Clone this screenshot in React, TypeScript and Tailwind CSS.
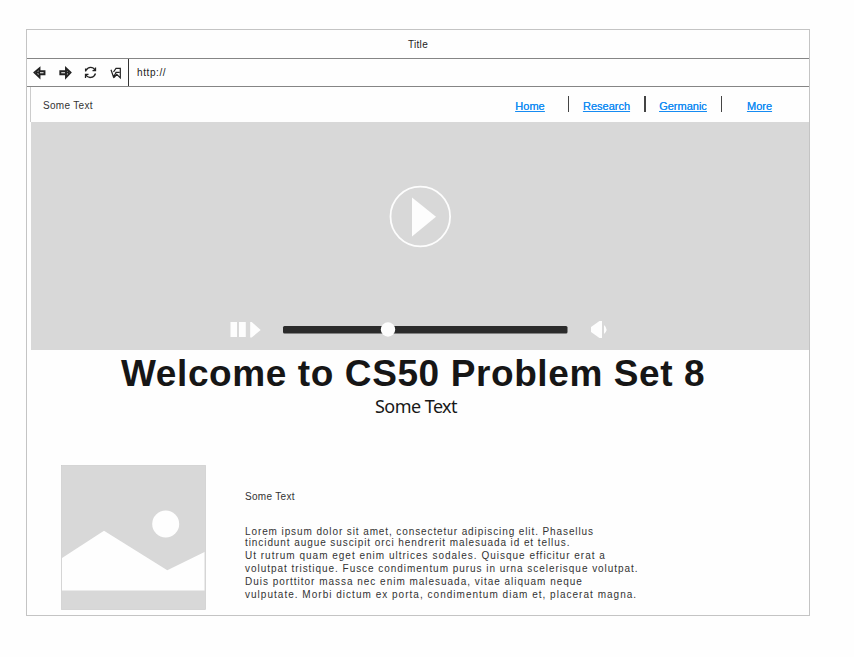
import type { ReactNode } from "react";

const body = "whitespace-nowrap text-[10px] leading-[13px]";

function Toolbar() {
  return (
    <div className="flex h-[28px] border-b border-[#858585]">
      <div className="flex w-[102px] shrink-0 items-center border-r-[1.5px] border-[#333]">
        <svg width="101" height="27" viewBox="27 59 101 27" fill="none" stroke="#222" strokeWidth="1.9">
          <path d="M34.5 72.5 L39.5 68.2 V71.2 H44.5 V74.2 H39.5 V77.3 Z M36 72.5 h4" />
          <path d="M70.5 72.5 L66 68.2 V71.2 H60.3 V74.2 H66 V77.3 Z M65 72.5 h4" />
          <path d="M85.6 71.5 V68.5 M86 70.5 C88 66.5 93 66.5 95 70.2 M95.5 67.5 V70.7 H92.5 M95.5 73.5 C94 78.2 88 78.8 86 75 M85.5 78 V74.4 H88.5" strokeWidth="1.3" />
          <path d="M111 69.8 L113.5 77 L116 72.5 M113.5 72 L116 68.3 H120.3 V77.8 L116.8 74.3 L114 77.7 M115.5 72.3 H119.5" strokeWidth="1.2" />
        </svg>
      </div>
      <div className="pt-[6px] pl-[8px] text-[10px] leading-[15px] tracking-[0.6px] text-[#222]">http://</div>
    </div>
  );
}

function NavLink({ children, className }: { children: ReactNode; className: string }) {
  return (
    <a className={`${className} shrink-0 text-center text-[11px] leading-[14px] text-[#168bf2] underline [text-shadow:0_0_0.5px_#168bf2]`}>
      {children}
    </a>
  );
}

function Divider() {
  return <span className="mb-[3px] h-[16px] w-[1.5px] shrink-0 bg-[#444]" />;
}

function Nav() {
  return (
    <nav className="ml-[3px] flex h-[35px] items-center border-l border-[#ccc] pl-[12px]">
      <span className="w-[449.5px] pt-px text-[10px] tracking-[0.3px] text-[#333]">Some Text</span>
      <div className="flex items-center pt-[2px]">
        <NavLink className="w-[75px]">Home</NavLink>
        <Divider />
        <NavLink className="w-[75px]">Research</NavLink>
        <Divider />
        <NavLink className="w-[75px]">Germanic</NavLink>
        <Divider />
        <NavLink className="w-[75px]">More</NavLink>
      </div>
    </nav>
  );
}

function Video() {
  return (
    <div className="ml-[4px] h-[228px] bg-[#d8d8d8]">
      <svg width="778" height="228" viewBox="31 122 778 228">
        <circle cx="420.3" cy="216.5" r="29.8" fill="none" stroke="#fdfdfd" strokeWidth="1.8" />
        <path d="M412 197.5 L436 216.8 L412 236.5 Z" fill="#fdfdfd" />
        <path d="M230.5 322 h6.5 v15 h-6.5 Z M239 322 h6.8 v15 H239 Z M250.2 322 h1.5 L260.7 330 L251.7 337.5 h-1.5 Z" fill="#fdfdfd" />
        <rect x="283" y="326" width="284.5" height="7.5" rx="1.5" fill="#2b2b2b" />
        <circle cx="388" cy="329.5" r="7.2" fill="#fdfdfd" />
        <path d="M591 327 L599.5 321 H602 V338 H599.5 L591 332 Z" fill="#fdfdfd" />
        <path d="M604 325 Q609 329.5 604 334 Z" fill="#fdfdfd" />
      </svg>
    </div>
  );
}

function Article() {
  return (
    <section className="flex pt-[49px] pl-[34px]">
      <svg width="145" height="145" viewBox="61 464.5 145 145" className="shrink-0">
        <rect x="61.5" y="465" width="144" height="144" fill="#d8d8d8" stroke="#ccc" strokeWidth="0.7" />
        <path d="M62 557.5 L104 530.3 L167.3 569.8 L204.5 551.5 V590 H62 Z" fill="#fefefe" />
        <circle cx="165.7" cy="523.5" r="13.5" fill="#fefefe" />
      </svg>
      <div className="pl-[39px] pt-[25px] text-[#333]">
        <div className={`${body} tracking-[0.3px]`}>Some Text</div>
        <div className="pt-[22px]">
          <div className={`${body} tracking-[0.9px]`}>Lorem ipsum dolor sit amet, consectetur adipiscing elit. Phasellus</div>
          <div className={`${body} -mt-[2px] tracking-[0.92px]`}>tincidunt augue suscipit orci hendrerit malesuada id et tellus.</div>
          <div className={`${body} tracking-[1px]`}>Ut rutrum quam eget enim ultrices sodales. Quisque efficitur erat a</div>
          <div className={`${body} tracking-[0.96px]`}>volutpat tristique. Fusce condimentum purus in urna scelerisque volutpat.</div>
          <div className={`${body} tracking-[0.98px]`}>Duis porttitor massa nec enim malesuada, vitae aliquam neque</div>
          <div className={`${body} tracking-[1.02px]`}>vulputate. Morbi dictum ex porta, condimentum diam et, placerat magna.</div>
        </div>
      </div>
    </section>
  );
}

export default function App() {
  return (
    <div className="h-[657px] w-[854px] overflow-hidden bg-[#fefefe] pt-[29px] pl-[26px] font-['Liberation_Sans',sans-serif]">
      <main className="h-[587px] w-[784px] border border-[#c4c4c4]">
        <header className="flex h-[29px] items-center justify-center border-b border-[#858585] text-[10px] tracking-[0.3px] text-[#222]">Title</header>
        <Toolbar />
        <Nav />
        <Video />
        <h1 className="h-[44px] pl-[94px] pt-[3px] text-[37px] font-bold leading-[42px] tracking-[0.6px] whitespace-nowrap text-[#161616]">
          Welcome to CS50 Problem Set 8
        </h1>
        <p className="h-[22px] pl-[348px] text-[18px] leading-[24px] tracking-[-0.55px] font-['Noto_Sans',sans-serif] text-[#181818]">Some Text</p>
        <Article />
      </main>
    </div>
  );
}
